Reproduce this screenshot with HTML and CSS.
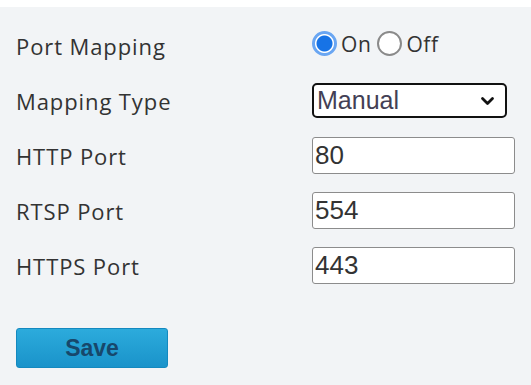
FILE: index.html
```html
<!DOCTYPE html>
<html>
<head>
    <meta name="viewport" content="width=device-width, initial-scale=1.0">
    <title>Port Mapping</title>
    <link rel="stylesheet" href="styles.css">
</head>
<body>
    <div class="topbar"></div>
    <div class="panel">
        <div class="form">
            <div class="label">Port Mapping</div>
            <div class="control radios">
                <span class="radio checked"></span><span class="radio-text">On</span>
                <span class="radio"></span><span class="radio-text">Off</span>
            </div>

            <div class="label">Mapping Type</div>
            <div class="control">
                <div class="select">
                    <span>Manual</span>
                    <svg class="chevron" width="15" height="10" viewBox="0 0 15 10">
                        <path d="M2.5 2.5 L7.5 7.5 L12.5 2.5" fill="none" stroke="#111" stroke-width="2.8" stroke-linecap="round" stroke-linejoin="round"/>
                    </svg>
                </div>
            </div>

            <div class="label">HTTP Port</div>
            <div class="control"><div class="input">80</div></div>

            <div class="label">RTSP Port</div>
            <div class="control"><div class="input">554</div></div>

            <div class="label">HTTPS Port</div>
            <div class="control"><div class="input">443</div></div>
        </div>

        <button class="btn-save">Save</button>
    </div>
</body>
</html>
```

FILE: styles.css
```css
:root {
    --bg-color: #f2f4f6;
    --text-color: #333333;
    --blue: #1773e6;
}

body {
    margin: 0;
    background-color: var(--bg-color);
    font-family: 'Open Sans', 'Noto Sans', sans-serif;
    color: var(--text-color);
}

.topbar {
    height: 7px;
    background: #ffffff;
}

.panel {
    padding: 11px 0 0 16px;
}

.form {
    display: grid;
    grid-template-columns: 296px 203px;
    grid-auto-rows: 55px;
    align-items: center;
}

.label {
    font-size: 22px;
    letter-spacing: 0.9px;
}

.control {
    display: flex;
    align-items: center;
}

.radios {
    font-size: 21px;
    letter-spacing: 0.6px;
    padding-bottom: 4px;
}

.radio {
    width: 21px;
    height: 21px;
    border: 2px solid #8a8a8a;
    border-radius: 50%;
    background: #fff;
    box-sizing: content-box;
    margin-right: 4px;
}

.radio.checked {
    border-color: #6aa6f2;
    background: radial-gradient(circle, var(--blue) 0, var(--blue) 7.5px, #fff 8.5px, #fff 9px, #6aa6f2 10px);
}

.radio-text {
    margin-right: 6px;
}

.select {
    width: 195px;
    height: 35px;
    box-sizing: border-box;
    border: 2.5px solid #111;
    border-radius: 5px;
    background: #fff;
    display: flex;
    align-items: center;
    justify-content: space-between;
    padding: 0 10px 0 3px;
    font-family: 'Liberation Sans', Arial, sans-serif;
    font-size: 25px;
    color: #433f55;
}

.input {
    width: 203px;
    height: 37px;
    box-sizing: border-box;
    border: 1.5px solid #8c8c8c;
    border-radius: 3px;
    background: #fff;
    padding-left: 2px;
    display: flex;
    align-items: center;
    font-family: 'Liberation Sans', Arial, sans-serif;
    font-size: 26px;
    color: #333;
}

.btn-save {
    margin-top: 35px;
    width: 152px;
    height: 40px;
    border: 1px solid #1489bf;
    border-radius: 3px;
    background: linear-gradient(#2cabdc, #1a93ca);
    font-family: 'Liberation Sans', Arial, sans-serif;
    font-size: 23px;
    font-weight: 700;
    color: #17476b;
    cursor: pointer;
}
```
